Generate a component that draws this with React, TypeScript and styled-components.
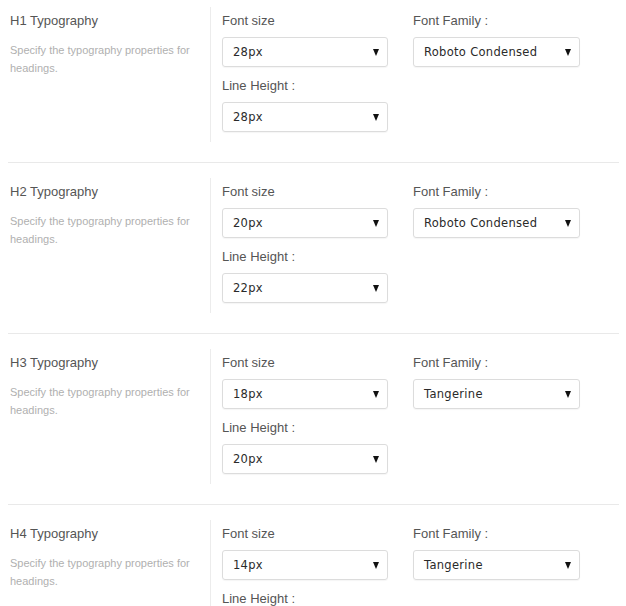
import React from "react";
import styled, { createGlobalStyle } from "styled-components";

const Global = createGlobalStyle`
  html, body { margin: 0; padding: 0; background: #fff; }
  body { font-family: "Liberation Sans", Arial, sans-serif; }
`;

const Page = styled.div`
  width: 611px;
  padding: 7px 7px 0 8px;
`;

const Section = styled.section`
  display: flex;
`;

const Separator = styled.hr`
  border: 0;
  border-top: 1px solid #e9e9e9;
  margin: 20px 0 15px;
  height: 0;
`;

const Info = styled.div`
  width: 200px;
  padding: 5px 0 0 2px;
`;

const Title = styled.div`
  font-size: 13px;
  line-height: 18px;
  color: #555;
`;

const Desc = styled.div`
  margin-top: 11px;
  font-size: 11px;
  line-height: 18px;
  color: #b0b0b0;
  padding-right: 10px;
`;

const Fields = styled.div`
  border-left: 1px solid #ececec;
  padding: 5px 0 10px 11px;
  display: grid;
  grid-template-columns: 166px 167px;
  column-gap: 25px;
  align-items: start;
`;

const Column = styled.div`
  display: flex;
  flex-direction: column;
`;

const Label = styled.div<{ $gap?: boolean }>`
  font-size: 13px;
  line-height: 18px;
  color: #555;
  margin-top: ${(p) => (p.$gap ? "10px" : "0")};
`;

const Select = styled.div`
  margin-top: 7px;
  height: 30px;
  box-sizing: border-box;
  border: 1px solid #dcdcdc;
  border-radius: 3px;
  box-shadow: 0 1px 1px rgba(0, 0, 0, 0.04);
  display: flex;
  align-items: center;
  justify-content: space-between;
  padding: 0 8px 0 10px;
  font-family: "DejaVu Sans", Verdana, sans-serif;
  font-size: 11.5px;
  letter-spacing: 0.3px;
  color: #2a2a2a;
`;

const Arrow = styled.span`
  width: 0;
  height: 0;
  border-left: 3.5px solid transparent;
  border-right: 3.5px solid transparent;
  border-top: 7px solid #111;
  margin-top: 1px;
`;

type Row = { tag: string; size: string; line: string; family: string };

const rows: Row[] = [
  { tag: "H1", size: "28px", line: "28px", family: "Roboto Condensed" },
  { tag: "H2", size: "20px", line: "22px", family: "Roboto Condensed" },
  { tag: "H3", size: "18px", line: "20px", family: "Tangerine" },
  { tag: "H4", size: "14px", line: "16px", family: "Tangerine" },
];

const Dropdown = ({ value }: { value: string }) => (
  <Select>
    <span>{value}</span>
    <Arrow />
  </Select>
);

export default function App() {
  return (
    <>
      <Global />
      <Page>
        {rows.map((r, i) => (
          <React.Fragment key={r.tag}>
            {i > 0 && <Separator />}
            <Section>
              <Info>
                <Title>{r.tag} Typography</Title>
                <Desc>Specify the typography properties for headings.</Desc>
              </Info>
              <Fields>
                <Column>
                  <Label>Font size</Label>
                  <Dropdown value={r.size} />
                  <Label $gap>Line Height :</Label>
                  <Dropdown value={r.line} />
                </Column>
                <Column>
                  <Label>Font Family :</Label>
                  <Dropdown value={r.family} />
                </Column>
              </Fields>
            </Section>
          </React.Fragment>
        ))}
      </Page>
    </>
  );
}
